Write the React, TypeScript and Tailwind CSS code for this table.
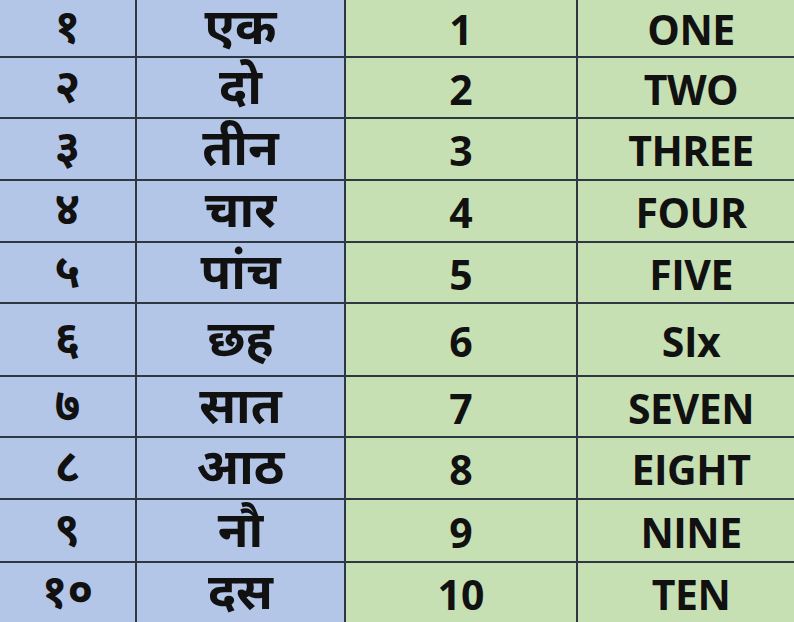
import React from "react";

const rows = [
  { h: "h-[56px]", d: "१", w: "एक", n: "1", e: "ONE" },
  { h: "h-[59px]", d: "२", w: "दो", n: "2", e: "TWO" },
  { h: "h-[60px]", d: "३", w: "तीन", n: "3", e: "THREE" },
  { h: "h-[60px]", d: "४", w: "चार", n: "4", e: "FOUR" },
  { h: "h-[59px]", d: "५", w: "पांच", n: "5", e: "FIVE" },
  { h: "h-[71px]", d: "६", w: "छह", n: "6", e: "SIx" },
  { h: "h-[59px]", d: "७", w: "सात", n: "7", e: "SEVEN" },
  { h: "h-[60px]", d: "८", w: "आठ", n: "8", e: "EIGHT" },
  { h: "h-[61px]", d: "९", w: "नौ", n: "9", e: "NINE" },
  { h: "h-[59px]", d: "१०", w: "दस", n: "10", e: "TEN" },
];

const deva = "font-['Noto_Sans_Devanagari','Noto_Sans','Lohit_Devanagari',sans-serif]";
const latin = "font-['Open_Sans','Liberation_Sans',sans-serif]";

export default function App() {
  return (
    <div className="w-[794px] h-[622px] overflow-hidden bg-[#2f3742]">
      <div className="grid grid-cols-[135px_207px_230px_216px] gap-[2px] text-[#111]">
        {rows.map((r, i) => (
          <React.Fragment key={i}>
            <div className={`${r.h} bg-[#b4c6e7] flex items-center justify-center ${deva} font-bold text-[46px] leading-none pt-[6px]`}>
              {r.d}
            </div>
            <div className={`${r.h} bg-[#b4c6e7] flex items-center justify-center ${deva} font-bold text-[50px] leading-none pt-[8px]`}>
              {r.w}
            </div>
            <div className={`${r.h} bg-[#c6e0b4] flex items-center justify-center ${latin} font-bold text-[41px] leading-none pt-[3px]`}>
              {r.n}
            </div>
            <div className={`${r.h} bg-[#c6e0b4] flex items-center justify-center ${latin} font-bold text-[41px] leading-none tracking-[-0.5px] pt-[3px] pl-[10px]`}>
              {r.e}
            </div>
          </React.Fragment>
        ))}
      </div>
    </div>
  );
}
